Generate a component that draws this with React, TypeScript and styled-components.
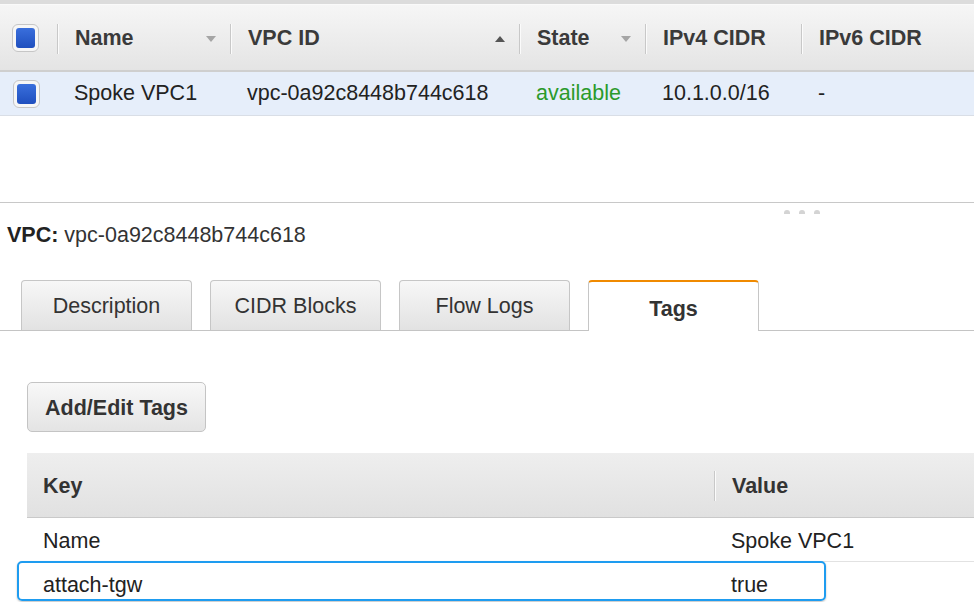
import styled, { createGlobalStyle } from "styled-components";

const GlobalStyle = createGlobalStyle`
  body {
    margin: 0;
    background: #ffffff;
    font-family: "Liberation Sans", Arial, sans-serif;
    color: #222;
    overflow: hidden;
  }
`;

const Page = styled.div`
  width: 974px;
  height: 602px;
  overflow: hidden;
`;

const ListPanel = styled.div`
  height: 202px;
  border-top: 4px solid #dcdcdc;
  box-sizing: border-box;
`;

const Grid = styled.div`
  display: grid;
  grid-template-columns: 57px 173px 289px 126px 156px 1fr;
`;

const HeaderRow = styled(Grid)`
  height: 65px;
  border-top: 1px solid #fafafa;
  border-bottom: 2px solid #cfcfcf;
  background: linear-gradient(#f6f6f6, #e4e4e4);
`;

const DataRow = styled(Grid)`
  height: 43px;
  background: #e6eefa;
  border-bottom: 1px solid #d9dee6;
`;

const HeadCell = styled.div`
  display: flex;
  align-items: center;
  padding-top: 2px;
  font-size: 21.5px;
  font-weight: bold;
  color: #3a3a3a;
`;

const Separator = styled.span`
  width: 1px;
  height: 30px;
  background: #c8c8c8;
  box-shadow: 1px 0 0 #fbfbfb;
  flex-shrink: 0;
`;

const HeadLabel = styled.span`
  padding-left: 17px;
  flex: 1;
`;

const SortArrow = styled.svg<{ $dark?: boolean }>`
  width: 10px;
  height: 6px;
  margin-right: 14px;
  fill: ${p => (p.$dark ? "#555" : "#a5a5a5")};
`;

const CheckCell = styled.div<{ $left?: number }>`
  display: flex;
  align-items: center;
  padding-left: ${p => p.$left ?? 12}px;
`;

const Checkbox = styled.span`
  width: 27px;
  height: 28px;
  flex-shrink: 0;
  box-sizing: border-box;
  border: 1px solid #c6c6c6;
  border-radius: 6px;
  background: #f6f6f6;
  display: flex;
  align-items: center;
  justify-content: center;
`;

const CheckFill = styled.span`
  display: block;
  width: 19px;
  height: 20px;
  border-radius: 3px;
  background: linear-gradient(#3a6fdc, #1f4fbe);
`;

const Cell = styled.div<{ $color?: string }>`
  display: flex;
  align-items: center;
  padding-left: 17px;
  font-size: 21.5px;
  color: ${p => p.$color || "#222"};
`;

const Splitter = styled.div`
  height: 20px;
  border-top: 1px solid #c8c8c8;
  display: flex;
  gap: 9px;
  padding: 7px 0 0 784px;
  box-sizing: border-box;
`;

const Dot = styled.span`
  width: 6px;
  height: 4px;
  border-radius: 3px 3px 0 0;
  background: #d4d4d4;
`;

const DetailTitle = styled.div`
  padding-left: 7px;
  font-size: 21.5px;
  line-height: 26px;
  color: #333;
  b {
    color: #222;
  }
`;

const TabBar = styled.div`
  margin-top: 32px;
  display: flex;
  gap: 18px;
  padding-left: 21px;
  height: 50px;
  border-bottom: 1px solid #c4c4c4;
`;

const Tab = styled.div<{ $active?: boolean }>`
  width: 171px;
  box-sizing: border-box;
  height: ${p => (p.$active ? "51px" : "50px")};
  border: 1px solid #c6c6c6;
  border-bottom: none;
  border-top: ${p => (p.$active ? "2px solid #f08a00" : "1px solid #c6c6c6")};
  border-radius: 4px 4px 0 0;
  background: ${p => (p.$active ? "#fff" : "linear-gradient(#f7f7f7, #e2e2e2)")};
  display: flex;
  align-items: center;
  justify-content: center;
  padding-top: ${p => (p.$active ? "5px" : "1px")};
  font-size: 21.5px;
  font-weight: ${p => (p.$active ? "bold" : "normal")};
  color: #333;
`;

const Content = styled.div`
  padding: 51px 0 0 27px;
`;

const Button = styled.button`
  width: 179px;
  height: 50px;
  border: 1px solid #c4c4c4;
  border-radius: 5px;
  background: linear-gradient(#f8f8f8, #e4e4e4);
  font-family: "Liberation Sans", Arial, sans-serif;
  font-size: 21.5px;
  font-weight: bold;
  color: #333;
  padding: 2px 0 0;
`;

const TagTable = styled.div`
  margin-top: 21px;
`;

const TagGrid = styled.div`
  display: grid;
  grid-template-columns: 687px 1fr;
`;

const TagHead = styled(TagGrid)`
  height: 64px;
  background: linear-gradient(#eeeeee, #e1e1e1);
  border-bottom: 1px solid #c9c9c9;
`;

const TagRow = styled(TagGrid)`
  position: relative;
  height: 43px;
  border-bottom: 1px solid #e2e2e2;
`;

const TagHeadCell = styled.div`
  display: flex;
  align-items: center;
  padding-top: 2px;
  font-size: 21.5px;
  font-weight: bold;
  color: #333;
`;

const TagCell = styled.div<{ $pad: number }>`
  display: flex;
  align-items: center;
  padding: 3px 0 0 ${p => p.$pad}px;
  font-size: 21.5px;
  color: #222;
`;

const Highlight = styled.span`
  position: absolute;
  left: -10px;
  top: -1px;
  width: 809px;
  height: 40px;
  box-sizing: border-box;
  border: 2px solid #1e9cf0;
  border-radius: 5px;
  box-shadow: 0 1px 2px rgba(0, 0, 0, 0.25);
  pointer-events: none;
`;

const Down = () => (
  <SortArrow viewBox="0 0 10 6">
    <polygon points="0,0 10,0 5,6" />
  </SortArrow>
);

const Up = () => (
  <SortArrow viewBox="0 0 10 6" $dark>
    <polygon points="0,6 10,6 5,0" />
  </SortArrow>
);

const tags = [
  { key: "Name", value: "Spoke VPC1" },
  { key: "attach-tgw", value: "true", highlight: true },
];

export default function App() {
  return (
    <Page>
      <GlobalStyle />
      <ListPanel>
        <HeaderRow>
          <CheckCell>
            <Checkbox>
              <CheckFill />
            </Checkbox>
          </CheckCell>
          <HeadCell>
            <Separator />
            <HeadLabel>Name</HeadLabel>
            <Down />
          </HeadCell>
          <HeadCell>
            <Separator />
            <HeadLabel>VPC ID</HeadLabel>
            <Up />
          </HeadCell>
          <HeadCell>
            <Separator />
            <HeadLabel>State</HeadLabel>
            <Down />
          </HeadCell>
          <HeadCell>
            <Separator />
            <HeadLabel>IPv4 CIDR</HeadLabel>
          </HeadCell>
          <HeadCell>
            <Separator />
            <HeadLabel>IPv6 CIDR</HeadLabel>
          </HeadCell>
        </HeaderRow>
        <DataRow>
          <CheckCell $left={13}>
            <Checkbox>
              <CheckFill />
            </Checkbox>
          </CheckCell>
          <Cell>Spoke VPC1</Cell>
          <Cell>vpc-0a92c8448b744c618</Cell>
          <Cell $color="#2b9a2b">available</Cell>
          <Cell>10.1.0.0/16</Cell>
          <Cell>-</Cell>
        </DataRow>
      </ListPanel>

      <Splitter>
        <Dot />
        <Dot />
        <Dot />
      </Splitter>

      <DetailTitle>
        <b>VPC:</b> vpc-0a92c8448b744c618
      </DetailTitle>

      <TabBar>
        <Tab>Description</Tab>
        <Tab>CIDR Blocks</Tab>
        <Tab>Flow Logs</Tab>
        <Tab $active>Tags</Tab>
      </TabBar>

      <Content>
        <Button>Add/Edit Tags</Button>
        <TagTable>
          <TagHead>
            <TagHeadCell>
              <HeadLabel style={{ paddingLeft: 16 }}>Key</HeadLabel>
            </TagHeadCell>
            <TagHeadCell>
              <Separator />
              <HeadLabel>Value</HeadLabel>
            </TagHeadCell>
          </TagHead>
          {tags.map(t => (
            <TagRow key={t.key}>
              <TagCell $pad={16}>{t.key}</TagCell>
              <TagCell $pad={17}>{t.value}</TagCell>
              {t.highlight && <Highlight />}
            </TagRow>
          ))}
        </TagTable>
      </Content>
    </Page>
  );
}
